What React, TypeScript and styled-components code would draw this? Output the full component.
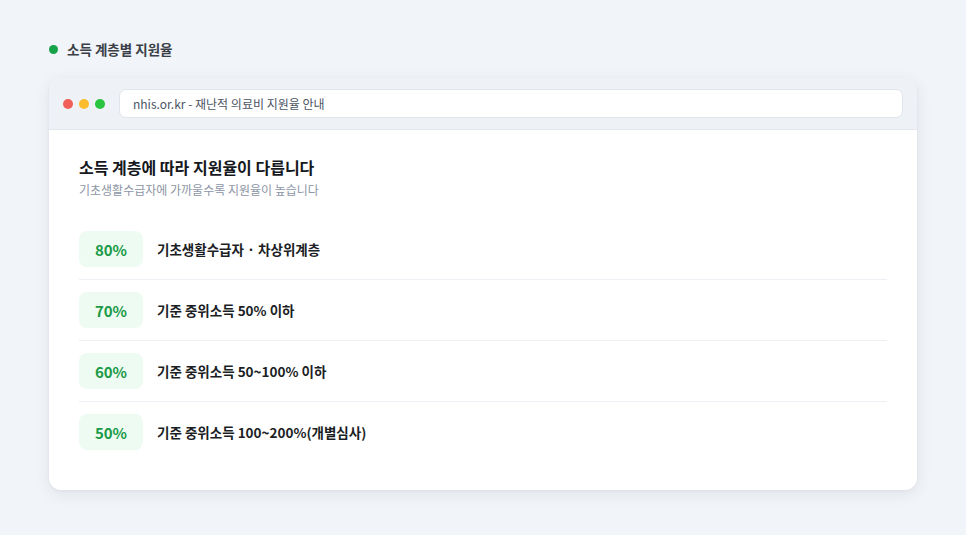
import React from "react";
import styled, { createGlobalStyle } from "styled-components";

const Global = createGlobalStyle`
  html, body { margin: 0; padding: 0; background: #f1f4f8; }
  body { font-family: "Noto Sans CJK KR", "Noto Sans", sans-serif; }
`;

const Page = styled.div`
  width: 966px;
  height: 535px;
  box-sizing: border-box;
  padding: 39px 49px 0 49px;
  background: #f1f4f8;
`;

const Label = styled.div`
  display: flex;
  align-items: center;
  gap: 9px;
  height: 20px;
  font-size: 13.5px;
  font-weight: 700;
  color: #3a3f47;
  margin-bottom: 19px;
`;

const Dot = styled.span<{ $c: string; $s?: number }>`
  width: ${(p) => p.$s ?? 10}px;
  height: ${(p) => p.$s ?? 10}px;
  border-radius: 50%;
  background: ${(p) => p.$c};
  flex: none;
`;

const Card = styled.div`
  background: #fff;
  border-radius: 12px;
  box-shadow: 0 4px 16px rgba(30, 40, 60, 0.08), 0 1px 3px rgba(30, 40, 60, 0.05);
  overflow: hidden;
`;

const Toolbar = styled.div`
  display: flex;
  align-items: center;
  height: 51px;
  padding: 0 14px;
  gap: 6px;
  background: #eef1f5;
  border-bottom: 1px solid #e3e7ed;
`;

const Dots = styled.div`
  display: flex;
  gap: 6px;
  margin-right: 8px;
`;

const Url = styled.div`
  flex: 1;
  height: 29px;
  box-sizing: border-box;
  display: flex;
  align-items: center;
  padding: 0 13px;
  background: #fff;
  border: 1px solid #e1e5eb;
  border-radius: 7px;
  font-size: 12px;
  color: #4b5563;
`;

const Body = styled.div`
  padding: 26px 30px 28px 30px;
`;

const Title = styled.h2`
  margin: 0;
  font-size: 16px;
  line-height: 22px;
  font-weight: 700;
  color: #15181d;
`;

const Sub = styled.p`
  margin: 4px 0 21px 0;
  font-size: 12px;
  line-height: 16px;
  color: #8b95a5;
`;

const Row = styled.div<{ $last?: boolean }>`
  display: flex;
  align-items: center;
  gap: 14px;
  padding: 12px 0;
  border-bottom: ${(p) => (p.$last ? "none" : "1px solid #eceff3")};
`;

const Badge = styled.div`
  width: 64px;
  height: 36px;
  border-radius: 8px;
  background: #eefbf2;
  display: flex;
  align-items: center;
  justify-content: center;
  font-size: 15px;
  font-weight: 700;
  color: #1a9a47;
`;

const RowText = styled.div`
  font-size: 13.5px;
  font-weight: 700;
  color: #1b1e24;
`;

const rows = [
  ["80%", "기초생활수급자 · 차상위계층"],
  ["70%", "기준 중위소득 50% 이하"],
  ["60%", "기준 중위소득 50~100% 이하"],
  ["50%", "기준 중위소득 100~200%(개별심사)"],
];

export default function App() {
  return (
    <Page>
      <Global />
      <Label>
        <Dot $c="#16a34a" $s={9} />
        소득 계층별 지원율
      </Label>
      <Card>
        <Toolbar>
          <Dots>
            <Dot $c="#f25f58" />
            <Dot $c="#fbbc2e" />
            <Dot $c="#29c440" />
          </Dots>
          <Url>nhis.or.kr - 재난적 의료비 지원율 안내</Url>
        </Toolbar>
        <Body>
          <Title>소득 계층에 따라 지원율이 다릅니다</Title>
          <Sub>기초생활수급자에 가까울수록 지원율이 높습니다</Sub>
          {rows.map(([p, t], i) => (
            <Row key={p} $last={i === rows.length - 1}>
              <Badge>{p}</Badge>
              <RowText>{t}</RowText>
            </Row>
          ))}
        </Body>
      </Card>
    </Page>
  );
}
